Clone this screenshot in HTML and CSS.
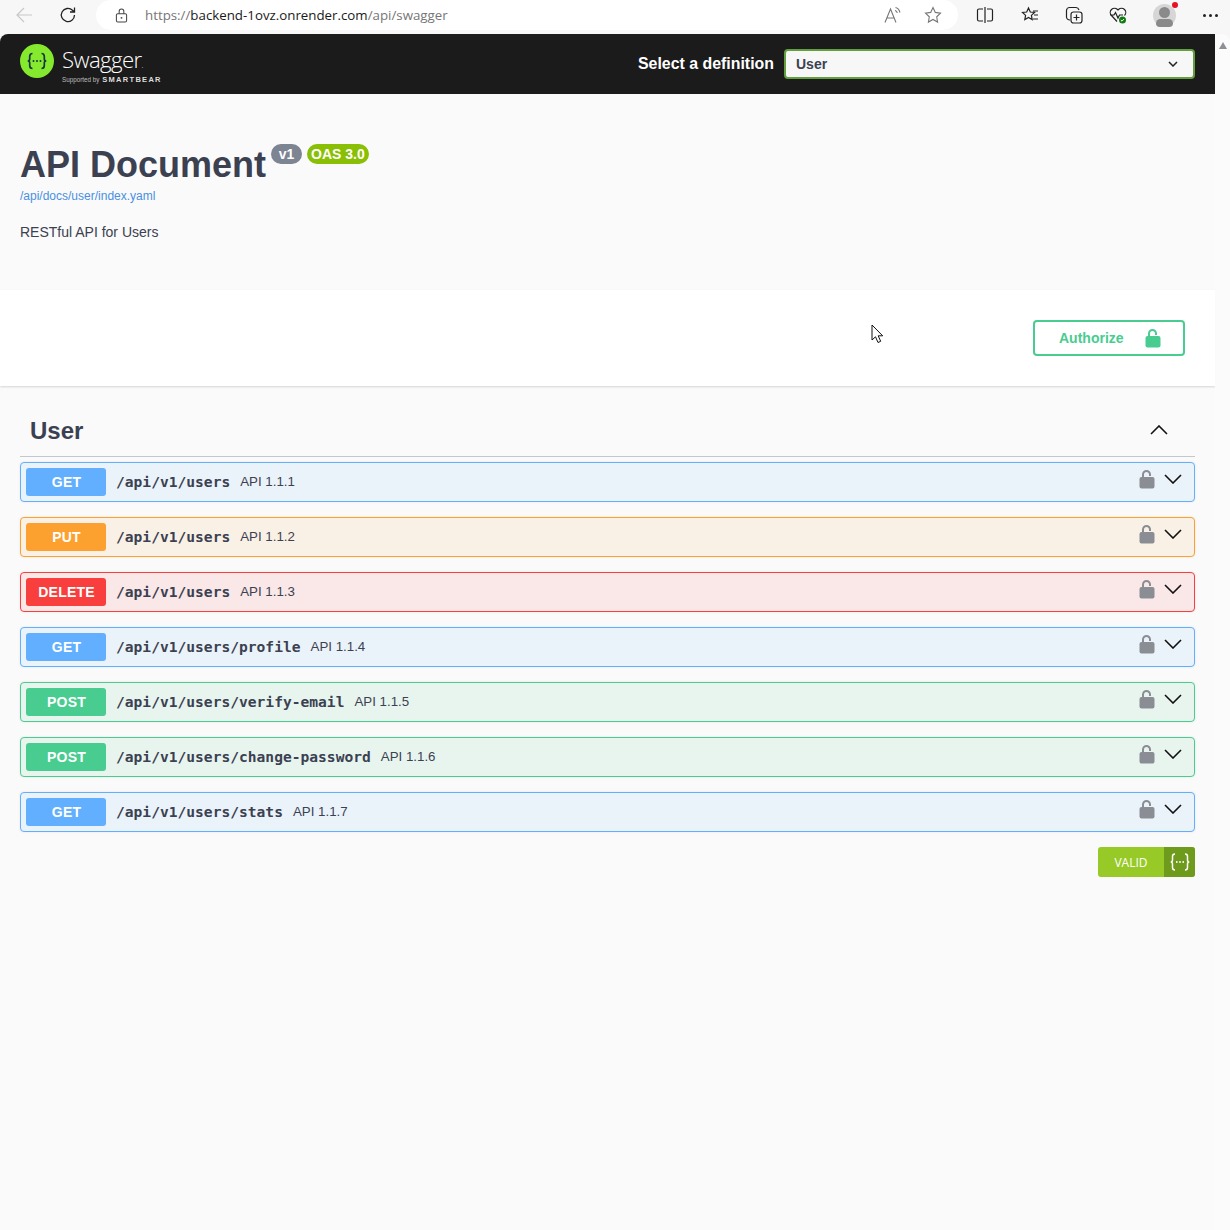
FILE: index.html
```html
<!DOCTYPE html>
<html lang="en">
<head>
  <meta charset="UTF-8">
  <title>Swagger UI</title>
  <link rel="stylesheet" href="styles.css">
</head>
<body>
  <svg class="defs" width="0" height="0">
    <symbol id="lock-open" viewBox="0 0 16 20"><path d="M4 10V5.500a3.500 3.500 0 0 1 7 0V7" fill="none" stroke="currentColor" stroke-width="2"/><rect x="0.500" y="8" width="15" height="11.500" rx="2" fill="currentColor"/></symbol>
    <symbol id="chev" viewBox="0 0 18 10"><path d="M1 1l8 8 8-8" fill="none" stroke="currentColor" stroke-width="1.6"/></symbol>
  </svg>

  <div class="browser-bar">
    <svg class="tool tool-back" viewBox="0 0 18 18"><path d="M17 9H2M9 2L2 9l7 7" fill="none" stroke="#c8c8c8" stroke-width="1.2"/></svg>
    <svg class="tool tool-reload" viewBox="0 0 18 18"><path d="M15.5 9a6.6 6.6 0 1 1-2-4.7L15.5 6M15.5 1.5V6H11" fill="none" stroke="#222" stroke-width="1.3"/></svg>
    <div class="address">
      <svg class="addr-lock" viewBox="0 0 14 16"><rect x="1.5" y="6" width="11" height="9" rx="1.5" fill="none" stroke="#444" stroke-width="1.1"/><path d="M4.5 6V3.5a2.5 2.5 0 0 1 5 0V6" fill="none" stroke="#444" stroke-width="1.1"/><circle cx="7" cy="10.5" r="1" fill="#444"/></svg>
      <span class="url"><span class="url-dim">https://</span>backend-1ovz.onrender.com<span class="url-dim">/api/swagger</span></span>
      <span class="addr-right">
        <svg class="tool" viewBox="0 0 18 18"><path d="M1 16.500L6.500 3l5.500 13.500M3 12h7M11.500 1.500c2.200.6 3.800 2.200 4.500 5M11 4.500c1.200.3 2 1.200 2.300 2.500" fill="none" stroke="#777" stroke-width="1.1"/></svg>
        <svg class="tool" viewBox="0 0 18 18"><path d="M9 1.500l2.300 4.900 5.200.7-3.800 3.700.9 5.300L9 13.500l-4.600 2.600.9-5.300L1.500 7.100l5.200-.7z" fill="none" stroke="#777" stroke-width="1.1"/></svg>
      </span>
    </div>
    <div class="tools">
      <svg class="tool" viewBox="0 0 18 18"><path d="M7 3H3a1.500 1.500 0 0 0-1.500 1.500v9A1.500 1.500 0 0 0 3 15h4M11 3h4a1.500 1.500 0 0 1 1.500 1.500v9A1.500 1.500 0 0 1 15 15h-4M9 1v16" fill="none" stroke="#222" stroke-width="1.2"/></svg>
      <svg class="tool tool-fav" viewBox="0 0 18 18"><path d="M7.500 2l1.800 4 4.200.5-3.100 2.900.8 4.200-3.700-2.100-3.700 2.100.8-4.200L1.500 6.500 5.700 6zM12 5h5M13 9h4M12 13h5" fill="none" stroke="#222" stroke-width="1.2"/></svg>
      <svg class="tool" viewBox="0 0 18 18"><rect x="6" y="6" width="11" height="11" rx="2.500" fill="none" stroke="#222" stroke-width="1.2"/><path d="M11.500 8.500v6M8.500 11.500h6M5 14c-2 0-3.500-1.500-3.500-3V4.500C1.500 3 3 1.500 4.500 1.500H11c1.500 0 2.500 1 3 2.500" fill="none" stroke="#222" stroke-width="1.2"/></svg>
      <svg class="tool tool-health" viewBox="0 0 18 18"><path d="M8 15.500L2.500 9.500a4.200 4.200 0 0 1 6-6L9 4l.5-.5a4.200 4.200 0 0 1 6 6M1 9h4l1.500-2.500L9 12l1.500-3H14" fill="none" stroke="#222" stroke-width="1.2"/><circle cx="13.500" cy="14" r="3.500" fill="#107c10"/><path d="M11.800 14l1.200 1.200 2-2.200" fill="none" stroke="#fff" stroke-width="1"/></svg>
      <span class="avatar"><i class="avatar-head"></i><i class="avatar-body"></i><i class="avatar-dot"></i></span>
      <span class="more"><i></i><i></i><i></i></span>
    </div>
  </div>

  <div class="window">
    <div class="page">
      <header class="topbar">
        <div class="brand">
          <span class="logo">
            <svg viewBox="0 0 34 34"><circle cx="17" cy="17" r="17" fill="#85ea2d"/><path d="M12.500 9.500c-2.500 0-2.800 1-2.800 3v2.500c0 1.500-.8 2-2 2 1.200 0 2 .5 2 2v2.500c0 2 .3 3 2.800 3M21.500 9.500c2.500 0 2.800 1 2.800 3v2.500c0 1.500.8 2 2 2-1.200 0-2 .5-2 2v2.500c0 2-.3 3-2.800 3" fill="none" stroke="#173646" stroke-width="1.7"/><circle cx="13.500" cy="17" r="1" fill="#173646"/><circle cx="17" cy="17" r="1" fill="#173646"/><circle cx="20.500" cy="17" r="1" fill="#173646"/></svg>
          </span>
          <span class="wordmark">
            <span class="wordmark-name">Swagger<small>.</small></span>
            <span class="wordmark-sub"><span>Supported by</span> <b>SMARTBEAR</b></span>
          </span>
        </div>
        <div class="definition">
          <span class="definition-label">Select a definition</span>
          <div class="definition-select">
            <span>User</span>
            <svg class="definition-chev" viewBox="0 0 10 6"><path d="M1 1l4 4 4-4" fill="none" stroke="#222" stroke-width="1.5"/></svg>
          </div>
        </div>
      </header>

      <section class="info">
        <div class="info-title">
          <h1>API Document</h1>
          <span class="badge badge-version">v1</span>
          <span class="badge badge-oas">OAS 3.0</span>
        </div>
        <a class="info-link" href="#">/api/docs/user/index.yaml</a>
        <p class="info-desc">RESTful API for Users</p>
      </section>

      <section class="auth">
        <svg class="cursor" viewBox="0 0 13 20"><path d="M1 1v15l3.500-3.200 2.500 5.700 2.700-1.200-2.500-5.500h4.500z" fill="#fff" stroke="#111" stroke-width="1"/></svg>
        <button class="authorize">
          <span>Authorize</span>
          <svg class="authorize-lock"><use href="#lock-open"/></svg>
        </button>
      </section>

      <section class="tag">
        <div class="tag-head">
          <h2>User</h2>
          <svg class="tag-chev" viewBox="0 0 18 10"><path d="M1 9l8-8 8 8" fill="none" stroke="#111" stroke-width="1.6"/></svg>
        </div>

        <div class="op op-get">
          <span class="method">GET</span><span class="path">/api/v1/users</span><span class="summary">API 1.1.1</span>
          <svg class="op-lock"><use href="#lock-open"/></svg><svg class="op-chev"><use href="#chev"/></svg>
        </div>
        <div class="op op-put">
          <span class="method">PUT</span><span class="path">/api/v1/users</span><span class="summary">API 1.1.2</span>
          <svg class="op-lock"><use href="#lock-open"/></svg><svg class="op-chev"><use href="#chev"/></svg>
        </div>
        <div class="op op-delete">
          <span class="method">DELETE</span><span class="path">/api/v1/users</span><span class="summary">API 1.1.3</span>
          <svg class="op-lock"><use href="#lock-open"/></svg><svg class="op-chev"><use href="#chev"/></svg>
        </div>
        <div class="op op-get">
          <span class="method">GET</span><span class="path">/api/v1/users/profile</span><span class="summary">API 1.1.4</span>
          <svg class="op-lock"><use href="#lock-open"/></svg><svg class="op-chev"><use href="#chev"/></svg>
        </div>
        <div class="op op-post">
          <span class="method">POST</span><span class="path">/api/v1/users/verify-email</span><span class="summary">API 1.1.5</span>
          <svg class="op-lock"><use href="#lock-open"/></svg><svg class="op-chev"><use href="#chev"/></svg>
        </div>
        <div class="op op-post">
          <span class="method">POST</span><span class="path">/api/v1/users/change-password</span><span class="summary">API 1.1.6</span>
          <svg class="op-lock"><use href="#lock-open"/></svg><svg class="op-chev"><use href="#chev"/></svg>
        </div>
        <div class="op op-get">
          <span class="method">GET</span><span class="path">/api/v1/users/stats</span><span class="summary">API 1.1.7</span>
          <svg class="op-lock"><use href="#lock-open"/></svg><svg class="op-chev"><use href="#chev"/></svg>
        </div>
      </section>

      <div class="valid-row">
        <div class="valid">
          <span class="valid-text">VALID</span>
          <span class="valid-icon">
            <svg viewBox="0 0 20 18"><path d="M5 1C2.800 1 2.500 2 2.500 3.500V7c0 1.200-.7 2-1.800 2 1.100 0 1.800.8 1.800 2v3.500c0 1.500.3 2.500 2.500 2.500M15 1c2.200 0 2.500 1 2.500 2.500V7c0 1.200.7 2 1.800 2-1.100 0-1.800.8-1.800 2v3.500c0 1.500-.3 2.500-2.500 2.500" fill="none" stroke="#fff" stroke-width="1.5"/><circle cx="6.800" cy="9" r=".9" fill="#fff"/><circle cx="10" cy="9" r=".9" fill="#fff"/><circle cx="13.200" cy="9" r=".9" fill="#fff"/></svg>
          </span>
        </div>
      </div>
    </div>
    <div class="scrollbar"><i class="scroll-arrow"></i></div>
  </div>
</body>
</html>
```

FILE: styles.css
```css
* {
  box-sizing: border-box;
}
html, body {
  height: 100%;
}
body {
  margin: 0;
  overflow: hidden;
  background: #f7f7f7;
  font-family: "Liberation Sans", Arial, sans-serif;
  color: #3b4151;
}
.defs {
  position: absolute;
}

/* browser chrome */
.browser-bar {
  height: 34px;
  display: flex;
  align-items: center;
  padding-left: 15px;
  padding-bottom: 4px;
}
.tool {
  width: 18px;
  height: 18px;
  flex: none;
  display: block;
}
.tool-reload {
  margin-left: 26px;
}
.address {
  width: 862px;
  height: 30px;
  margin-left: 19px;
  background: #fff;
  border-radius: 15px;
  display: flex;
  align-items: center;
  padding-left: 19px;
  padding-right: 16px;
}
.addr-lock {
  width: 13px;
  height: 15px;
}
.url {
  margin-left: 17px;
  font-family: "Open Sans", "Liberation Sans", sans-serif;
  font-size: 13.3px;
  color: #1a1a1a;
}
.url-dim {
  color: #767676;
}
.addr-right {
  margin-left: auto;
  display: flex;
  gap: 22px;
}
.tools {
  display: flex;
  align-items: center;
  margin-left: 18px;
  gap: 26px;
}
.tool-fav {
  margin-left: 1px;
}
.avatar {
  position: relative;
  width: 23px;
  height: 23px;
  border-radius: 50%;
  background: #d6d6d6;
}
.avatar-head {
  position: absolute;
  left: 6px;
  top: 3px;
  width: 11px;
  height: 11px;
  border-radius: 50%;
  background: #8a8a8a;
}
.avatar-body {
  position: absolute;
  left: 3px;
  top: 15px;
  width: 17px;
  height: 8px;
  border-radius: 8px 8px 7px 7px;
  background: #8a8a8a;
}
.avatar-dot {
  position: absolute;
  right: -2px;
  top: -2px;
  width: 6px;
  height: 6px;
  border-radius: 50%;
  background: #e81123;
}
.more {
  display: flex;
  gap: 3px;
  margin-left: 1px;
}
.more i {
  width: 3px;
  height: 3px;
  border-radius: 50%;
  background: #222;
}

/* window */
.window {
  display: flex;
  height: 1196px;
}
.page {
  width: 1215px;
  background: #fafafa;
  border-top-left-radius: 8px;
  overflow: hidden;
}
.scrollbar {
  flex: 1;
  background: #fbfbfb;
  display: flex;
  justify-content: center;
  padding-top: 8px;
  border-top-right-radius: 8px;
}
.scroll-arrow {
  width: 0;
  height: 0;
  border-left: 4.5px solid transparent;
  border-right: 4.5px solid transparent;
  border-bottom: 7px solid #8c8f96;
}

/* top bar */
.topbar {
  height: 60px;
  background: #1b1b1b;
  display: flex;
  align-items: center;
  justify-content: space-between;
  padding: 0 20px;
}
.brand {
  display: flex;
  align-items: flex-start;
  gap: 8px;
  height: 40px;
}
.logo {
  width: 34px;
  height: 34px;
}
.logo svg {
  display: block;
}
.wordmark {
  display: flex;
  flex-direction: column;
  margin-top: 3px;
  color: #fff;
}
.wordmark-name {
  font-family: "Open Sans", sans-serif;
  font-size: 22.2px;
  line-height: 26px;
  letter-spacing: -0.6px;
  font-weight: 300;
}
.wordmark-name small {
  font-size: 8px;
  line-height: 0;
}
.wordmark-sub {
  margin-top: 3px;
  font-size: 6.3px;
  line-height: 8px;
  color: #bbb;
  white-space: nowrap;
}
.wordmark-sub b {
  margin-left: 1px;
  font-size: 7.5px;
  line-height: 0;
  letter-spacing: 1.3px;
  color: #ddd;
}
.definition {
  display: flex;
  align-items: center;
  gap: 10px;
}
.definition-label {
  color: #fff;
  font-size: 15.9px;
  font-weight: 700;
}
.definition-select {
  width: 411px;
  height: 30px;
  background: #f7f7f7;
  border: 2px solid #62a03f;
  border-radius: 4px;
  display: flex;
  align-items: center;
  justify-content: space-between;
  padding: 0 15px 0 10px;
  font-size: 14px;
  font-weight: 700;
  color: #3b4151;
}
.definition-chev {
  width: 10px;
  height: 6px;
}

/* info */
.info {
  height: 196px;
  padding: 50px 20px 0;
}
.info-title {
  display: flex;
  align-items: flex-start;
  height: 41px;
}
.info-title h1 {
  margin: 0;
  font-size: 36px;
  line-height: 41px;
  font-weight: 700;
  color: #3b4151;
}
.badge {
  height: 20px;
  border-radius: 10px;
  font-size: 14px;
  line-height: 20px;
  font-weight: 700;
  color: #fff;
  padding: 0 4px;
}
.badge-version {
  width: 31px;
  margin-left: 5px;
  text-align: center;
  background: #7d8492;
}
.badge-oas {
  margin-left: 5px;
  background: #89bf04;
}
.info-link {
  display: block;
  margin-top: 4px;
  font-size: 12px;
  line-height: 14px;
  color: #4990e2;
  text-decoration: none;
}
.info-desc {
  margin: 21px 0 0;
  font-size: 14px;
  line-height: 16px;
}

/* authorize */
.auth {
  position: relative;
  height: 96px;
  background: #fff;
  box-shadow: 0 1px 2px rgba(0, 0, 0, 0.15);
  display: flex;
  align-items: flex-start;
  justify-content: flex-end;
  padding: 30px 30px 0 0;
}
.cursor {
  position: absolute;
  left: 871px;
  top: 34px;
  width: 13px;
  height: 20px;
}
.authorize {
  width: 152px;
  height: 36px;
  background: #fff;
  border: 2px solid #49cc90;
  border-radius: 4px;
  display: flex;
  align-items: center;
  padding: 0 0 0 24px;
  font-family: inherit;
  font-size: 14px;
  font-weight: 700;
  color: #49cc90;
}
.authorize-lock {
  width: 16px;
  height: 20px;
  margin-left: 21px;
  color: #49cc90;
}

/* operations */
.tag {
  padding: 0 20px;
}
.tag-head {
  height: 71px;
  border-bottom: 1px solid #c5c7cc;
  display: flex;
  align-items: flex-end;
  justify-content: space-between;
  padding: 0 27px 0 10px;
  margin-bottom: 5px;
}
.tag-head h2 {
  margin: 0 0 8px;
  font-size: 24px;
  line-height: 34px;
  font-weight: 700;
  color: #3b4151;
}
.tag-chev {
  width: 18px;
  height: 10px;
  margin-bottom: 21px;
}
.op {
  height: 40px;
  margin-bottom: 15px;
  border: 1px solid;
  border-radius: 4px;
  display: flex;
  align-items: center;
  padding: 0 12px 0 5px;
  box-shadow: 0 0 3px rgba(0, 0, 0, 0.08);
}
.method {
  width: 80px;
  height: 28px;
  padding-left: 1px;
  border-radius: 3px;
  color: #fff;
  font-size: 14px;
  font-weight: 700;
  line-height: 28px;
  letter-spacing: 0.2px;
  text-align: center;
}
.path {
  margin-left: 10px;
  margin-bottom: 2px;
  font-family: "DejaVu Sans Mono", "Liberation Mono", monospace;
  font-size: 14.6px;
  font-weight: 700;
  color: #3b4151;
}
.summary {
  margin-left: 10px;
  margin-bottom: 2px;
  font-size: 13.3px;
  color: #3b4151;
}
.op-lock {
  width: 16px;
  height: 20px;
  margin-left: auto;
  margin-top: -6px;
  color: #8a8d93;
}
.op-chev {
  width: 18px;
  height: 10px;
  margin-left: 9px;
  margin-top: -6px;
  color: #111;
}
.op-get {
  background: #ebf3fa;
  border-color: #61affe;
}
.op-get .method {
  background: #61affe;
}
.op-put {
  background: #faf1e6;
  border-color: #fca130;
}
.op-put .method {
  background: #fca130;
}
.op-delete {
  background: #fae7e7;
  border-color: #f93e3e;
}
.op-delete .method {
  background: #f93e3e;
}
.op-post {
  background: #e8f5ef;
  border-color: #49cc90;
}
.op-post .method {
  background: #49cc90;
}

/* validator */
.valid-row {
  display: flex;
  justify-content: flex-end;
  padding: 0 20px;
}
.valid {
  width: 97px;
  height: 30px;
  display: flex;
  border-radius: 3px;
  overflow: hidden;
  color: #fff;
  font-family: "Open Sans", sans-serif;
  font-size: 12px;
  background: #97ca26;
}
.valid-text {
  flex: 1;
  text-align: center;
  line-height: 31px;
}
.valid-icon {
  width: 31px;
  background: #6e9b1c;
  display: flex;
  align-items: center;
  justify-content: center;
}
.valid-icon svg {
  width: 20px;
  height: 18px;
}
```
